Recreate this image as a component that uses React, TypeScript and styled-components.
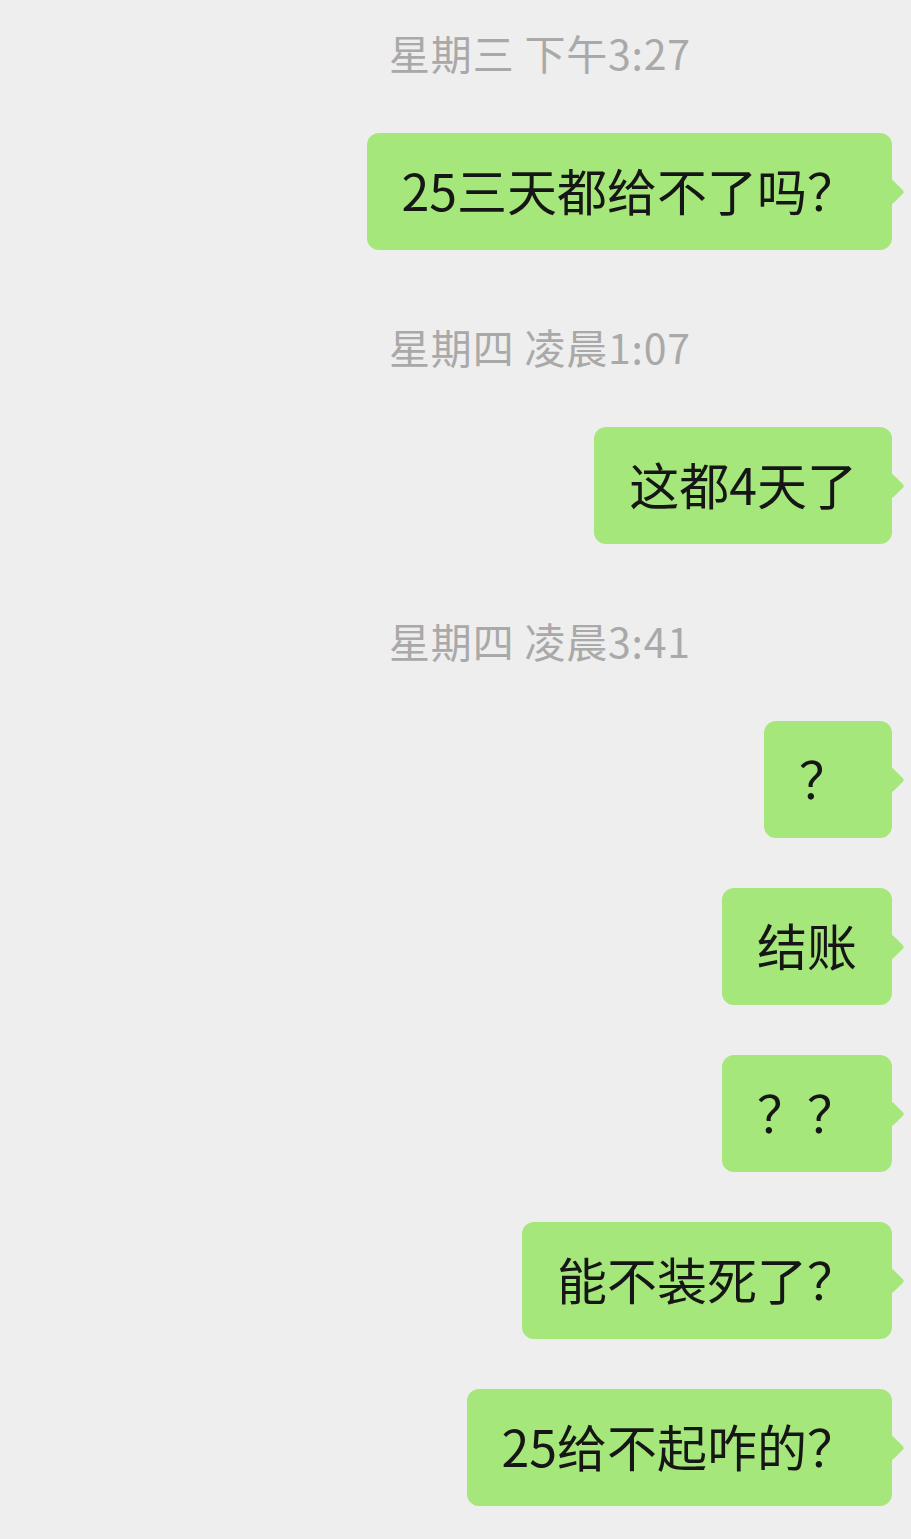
import React from "react";
import styled, { createGlobalStyle } from "styled-components";

const GlobalStyle = createGlobalStyle`
  html, body {
    margin: 0;
    padding: 0;
    background: #eeeeee;
    overflow: hidden;
  }
  body {
    font-family: "Noto Sans CJK SC", "Noto Sans", sans-serif;
  }
`;

/* The chat pane; the avatar column on the right lies outside the visible area. */
const Screen = styled.div`
  width: 100%;
  min-height: 1539px;
  background: #eeeeee;
  display: flex;
  flex-direction: column;
  padding-bottom: 34px;
  box-sizing: border-box;
`;

const Timestamp = styled.div<{ $first?: boolean }>`
  padding: ${(p) => (p.$first ? "32px" : "76px")} 0 61px 169px;
  text-align: center;
  font-size: 41px;
  line-height: 40px;
  color: #a9a9a9;
  letter-spacing: 0.8px;
`;

const Group = styled.div`
  display: flex;
  flex-direction: column;
  gap: 50px;
`;

const Row = styled.div`
  display: flex;
  justify-content: flex-end;
  padding-right: 19px;
`;

const Bubble = styled.div`
  position: relative;
  min-width: 128px;
  height: 117px;
  box-sizing: border-box;
  padding: 0 35px 5px;
  display: flex;
  align-items: center;
  background: #a6e77b;
  border-radius: 12px;
  color: #161616;
  font-size: 50px;
  line-height: 70px;
  white-space: nowrap;

  &::after {
    content: "";
    position: absolute;
    top: 50%;
    right: -9px;
    width: 18px;
    height: 18px;
    margin-top: -9px;
    background: #a6e77b;
    border-radius: 3px;
    transform: rotate(45deg);
  }
`;

type Section = { time: string; messages: string[] };

const sections: Section[] = [
  { time: "星期三 下午3:27", messages: ["25三天都给不了吗？"] },
  { time: "星期四 凌晨1:07", messages: ["这都4天了"] },
  {
    time: "星期四 凌晨3:41",
    messages: ["？", "结账", "？？", "能不装死了？", "25给不起咋的？"],
  },
];

export default function App() {
  return (
    <>
      <GlobalStyle />
      <Screen>
        {sections.map((s, i) => (
          <React.Fragment key={s.time}>
            <Timestamp $first={i === 0}>{s.time}</Timestamp>
            <Group>
              {s.messages.map((m, j) => (
                <Row key={j}>
                  <Bubble>{m}</Bubble>
                </Row>
              ))}
            </Group>
          </React.Fragment>
        ))}
      </Screen>
    </>
  );
}
